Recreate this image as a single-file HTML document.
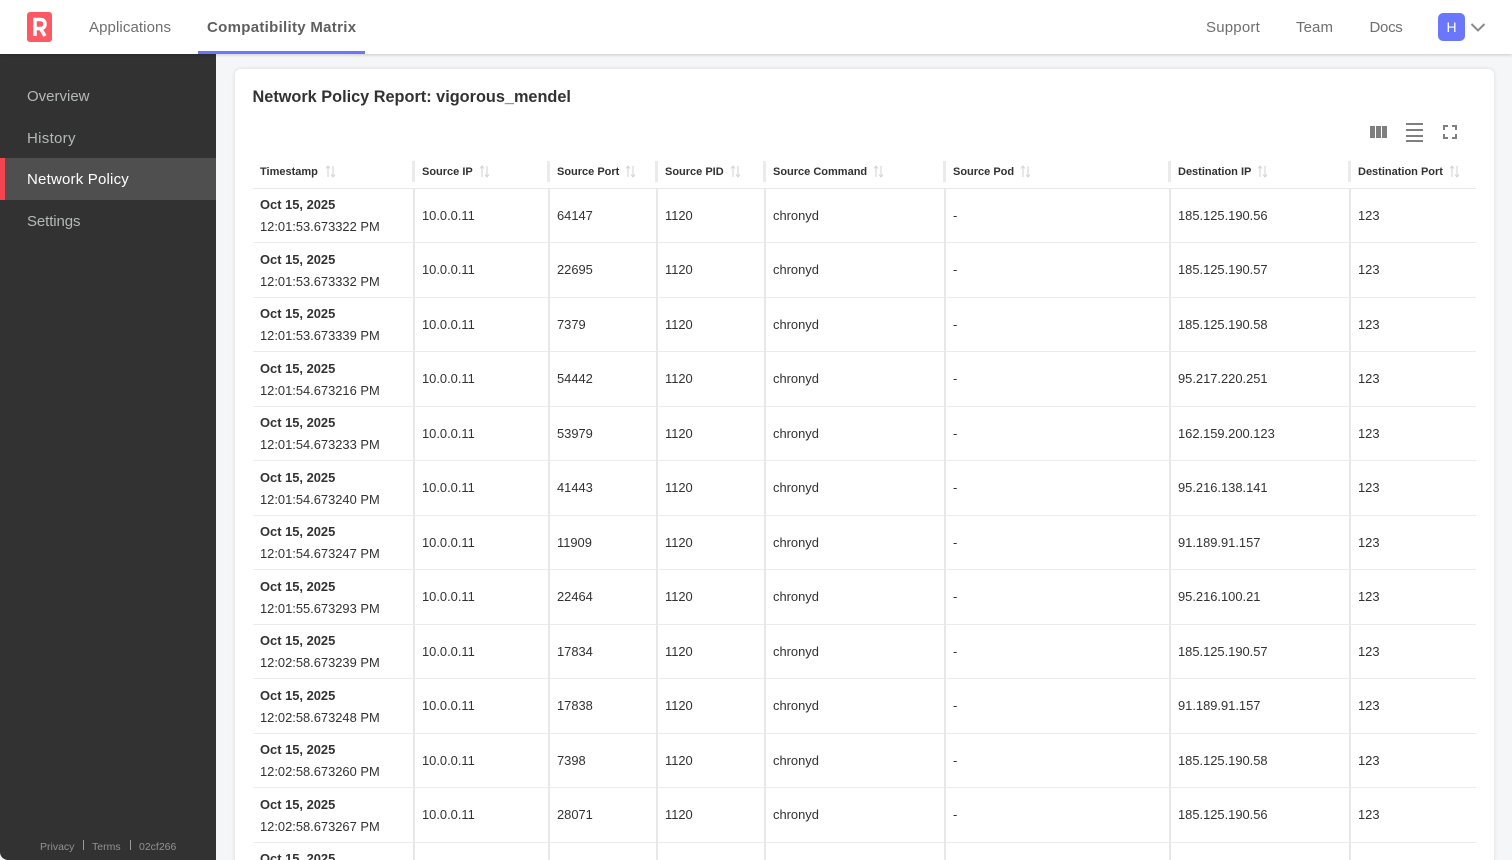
<!DOCTYPE html>
<html><head><meta charset="utf-8"><style>
*{box-sizing:border-box}
html,body{margin:0;padding:0;width:1512px;height:860px;overflow:hidden;background:#f5f6f8;font-family:"Liberation Sans",sans-serif;color:#323232}
#page{position:relative;width:1512px;height:860px;overflow:hidden;background:#f5f6f8}
.abs{position:absolute}
#top{position:absolute;left:0;top:0;width:1512px;height:54px;background:#fff;box-shadow:0 1px 3px rgba(0,0,0,.18);z-index:3}
.nav{position:absolute;top:18px;font-size:15px;line-height:20px;color:#6f6f6f;white-space:nowrap}
#side{position:absolute;left:0;top:54px;width:216px;height:806px;background:#323232;border-bottom-left-radius:8px;z-index:2}
.si{position:absolute;left:27px;font-size:15px;line-height:20px;color:#b4b8b8;white-space:nowrap}
.foot{position:absolute;top:786px;font-size:10.5px;line-height:14px;color:#8f9393;white-space:nowrap}
#card{position:absolute;left:235px;top:69px;width:1259px;height:830px;background:#fff;border-radius:6px;box-shadow:0 0 4px rgba(0,0,0,.12)}
h1{position:absolute;left:252.500px;top:87px;margin:0;font-size:16.300px;line-height:20px;font-weight:bold;color:#323232;white-space:nowrap;z-index:1}
table{position:absolute;left:253px;top:154px;width:1223px;table-layout:fixed;border-collapse:separate;border-spacing:0;font-size:12.900px}
th{height:34.500px;padding:2px 0 0 9px;text-align:left;font-size:11px;font-weight:bold;border-bottom:1px solid #e8e8e8;white-space:nowrap;position:relative;color:#323232}
th:first-child,td:first-child{padding-left:7px}
th:not(:first-child)::before{content:"";position:absolute;left:-1px;top:7px;width:2.500px;height:21px;background:#ebebeb}
td{height:54.500px;padding:0 0 0 7px;border-left:2px solid #e8e8e8;border-bottom:1px solid #ececec;white-space:nowrap;color:#323232;vertical-align:middle}
td:first-child{border-left:0;line-height:22px;padding-top:2px}
td b{display:block}
.s{display:inline-block;vertical-align:-3px;margin-left:4px}
th+th .s{margin-left:3px}
</style></head><body>
<div id="page">
<div id="top">
<svg class="abs" style="left:27px;top:12px" width="26" height="30" viewBox="0 0 26 30"><rect width="25" height="30" rx="3" fill="#fb5a65"/><path d="M8 24V7.500h5.500c3 0 4.500 1.700 4.500 4.500S16.500 16.500 13.500 16.500H8M13.500 16.500l4.500 7.500" fill="none" stroke="#fff" stroke-width="3.500"/></svg>
<span class="nav" style="left:89px;letter-spacing:.1px">Applications</span>
<span class="nav" style="left:207px;font-weight:bold;color:#5f5f5f;letter-spacing:.3px">Compatibility Matrix</span>
<div class="abs" style="left:198px;top:51px;width:167px;height:3px;background:#6a77fb"></div>
<span class="nav" style="left:1206px;letter-spacing:.2px">Support</span>
<span class="nav" style="left:1296px;letter-spacing:.1px">Team</span>
<span class="nav" style="left:1369.500px;letter-spacing:-.3px">Docs</span>
<div class="abs" style="left:1438px;top:13px;width:27px;height:28px;border-radius:5px;background:#6a77fb;color:#fff;font-size:14px;line-height:28px;text-align:center">H</div>
<svg class="abs" style="left:1470px;top:22px" width="16" height="11" viewBox="0 0 16 11"><path d="M1.500 2L8 8.500 14.500 2" fill="none" stroke="#8b8b8b" stroke-width="2"/></svg>
</div>
<div id="side">
<span class="si" style="top:33px">Overview</span>
<span class="si" style="top:75px;letter-spacing:.3px">History</span>
<div class="abs" style="left:0;top:104px;width:216px;height:42px;background:#4f4f4f;border-left:5px solid #f4444f"></div>
<span class="si" style="top:116px;color:#fff;letter-spacing:.2px">Network Policy</span>
<span class="si" style="top:158px;letter-spacing:-.1px">Settings</span>
<span class="foot" style="left:40px">Privacy</span>
<div class="abs" style="left:83px;top:786px;width:1px;height:10px;background:#9a9a9a"></div>
<span class="foot" style="left:92px">Terms</span>
<div class="abs" style="left:130px;top:786px;width:1px;height:10px;background:#9a9a9a"></div>
<span class="foot" style="left:139px">02cf266</span>
</div>
<div id="card"></div>
<h1>Network Policy Report: vigorous_mendel</h1>
<svg class="abs" style="left:1369px;top:121px" width="90" height="22" viewBox="0 0 90 22"><g fill="#7f7f7f"><rect x="1" y="5" width="5" height="12"/><rect x="7" y="5" width="5" height="12"/><rect x="13" y="5" width="5" height="12"/><rect x="37" y="2" width="17" height="2"/><rect x="37" y="8" width="17" height="2"/><rect x="37" y="14" width="17" height="2"/><rect x="37" y="19" width="17" height="2"/></g><path d="M75 9V5h4M83 5h4v4M87 13v4h-4M79 17h-4v-4" fill="none" stroke="#7f7f7f" stroke-width="2"/></svg>
<table>
<colgroup><col style="width:160px"><col style="width:135px"><col style="width:108px"><col style="width:108px"><col style="width:180px"><col style="width:225px"><col style="width:180px"><col style="width:127px"></colgroup>
<thead><tr>
<th>Timestamp <svg class="s" width="11" height="13" viewBox="0 0 11 13"><path d="M3 12V1M1 3.500L3 1l2 2.500M8 1v11M6 9.500L8 12l2-2.500" fill="none" stroke="#d2d2d2"/></svg></th>
<th>Source IP <svg class="s" width="11" height="13" viewBox="0 0 11 13"><path d="M3 12V1M1 3.500L3 1l2 2.500M8 1v11M6 9.500L8 12l2-2.500" fill="none" stroke="#d2d2d2"/></svg></th>
<th>Source Port <svg class="s" width="11" height="13" viewBox="0 0 11 13"><path d="M3 12V1M1 3.500L3 1l2 2.500M8 1v11M6 9.500L8 12l2-2.500" fill="none" stroke="#d2d2d2"/></svg></th>
<th>Source PID <svg class="s" width="11" height="13" viewBox="0 0 11 13"><path d="M3 12V1M1 3.500L3 1l2 2.500M8 1v11M6 9.500L8 12l2-2.500" fill="none" stroke="#d2d2d2"/></svg></th>
<th>Source Command <svg class="s" width="11" height="13" viewBox="0 0 11 13"><path d="M3 12V1M1 3.500L3 1l2 2.500M8 1v11M6 9.500L8 12l2-2.500" fill="none" stroke="#d2d2d2"/></svg></th>
<th>Source Pod <svg class="s" width="11" height="13" viewBox="0 0 11 13"><path d="M3 12V1M1 3.500L3 1l2 2.500M8 1v11M6 9.500L8 12l2-2.500" fill="none" stroke="#d2d2d2"/></svg></th>
<th>Destination IP <svg class="s" width="11" height="13" viewBox="0 0 11 13"><path d="M3 12V1M1 3.500L3 1l2 2.500M8 1v11M6 9.500L8 12l2-2.500" fill="none" stroke="#d2d2d2"/></svg></th>
<th>Destination Port <svg class="s" width="11" height="13" viewBox="0 0 11 13"><path d="M3 12V1M1 3.500L3 1l2 2.500M8 1v11M6 9.500L8 12l2-2.500" fill="none" stroke="#d2d2d2"/></svg></th>
</tr></thead>
<tbody>
<tr><td><b>Oct 15, 2025</b>12:01:53.673322 PM</td><td>10.0.0.11</td><td>64147</td><td>1120</td><td>chronyd</td><td>-</td><td>185.125.190.56</td><td>123</td></tr>
<tr><td><b>Oct 15, 2025</b>12:01:53.673332 PM</td><td>10.0.0.11</td><td>22695</td><td>1120</td><td>chronyd</td><td>-</td><td>185.125.190.57</td><td>123</td></tr>
<tr><td><b>Oct 15, 2025</b>12:01:53.673339 PM</td><td>10.0.0.11</td><td>7379</td><td>1120</td><td>chronyd</td><td>-</td><td>185.125.190.58</td><td>123</td></tr>
<tr><td><b>Oct 15, 2025</b>12:01:54.673216 PM</td><td>10.0.0.11</td><td>54442</td><td>1120</td><td>chronyd</td><td>-</td><td>95.217.220.251</td><td>123</td></tr>
<tr><td><b>Oct 15, 2025</b>12:01:54.673233 PM</td><td>10.0.0.11</td><td>53979</td><td>1120</td><td>chronyd</td><td>-</td><td>162.159.200.123</td><td>123</td></tr>
<tr><td><b>Oct 15, 2025</b>12:01:54.673240 PM</td><td>10.0.0.11</td><td>41443</td><td>1120</td><td>chronyd</td><td>-</td><td>95.216.138.141</td><td>123</td></tr>
<tr><td><b>Oct 15, 2025</b>12:01:54.673247 PM</td><td>10.0.0.11</td><td>11909</td><td>1120</td><td>chronyd</td><td>-</td><td>91.189.91.157</td><td>123</td></tr>
<tr><td><b>Oct 15, 2025</b>12:01:55.673293 PM</td><td>10.0.0.11</td><td>22464</td><td>1120</td><td>chronyd</td><td>-</td><td>95.216.100.21</td><td>123</td></tr>
<tr><td><b>Oct 15, 2025</b>12:02:58.673239 PM</td><td>10.0.0.11</td><td>17834</td><td>1120</td><td>chronyd</td><td>-</td><td>185.125.190.57</td><td>123</td></tr>
<tr><td><b>Oct 15, 2025</b>12:02:58.673248 PM</td><td>10.0.0.11</td><td>17838</td><td>1120</td><td>chronyd</td><td>-</td><td>91.189.91.157</td><td>123</td></tr>
<tr><td><b>Oct 15, 2025</b>12:02:58.673260 PM</td><td>10.0.0.11</td><td>7398</td><td>1120</td><td>chronyd</td><td>-</td><td>185.125.190.58</td><td>123</td></tr>
<tr><td><b>Oct 15, 2025</b>12:02:58.673267 PM</td><td>10.0.0.11</td><td>28071</td><td>1120</td><td>chronyd</td><td>-</td><td>185.125.190.56</td><td>123</td></tr>
<tr><td><b>Oct 15, 2025</b>&nbsp;</td><td></td><td></td><td></td><td></td><td></td><td></td><td></td></tr>
</tbody></table>
</div>
</body></html>
